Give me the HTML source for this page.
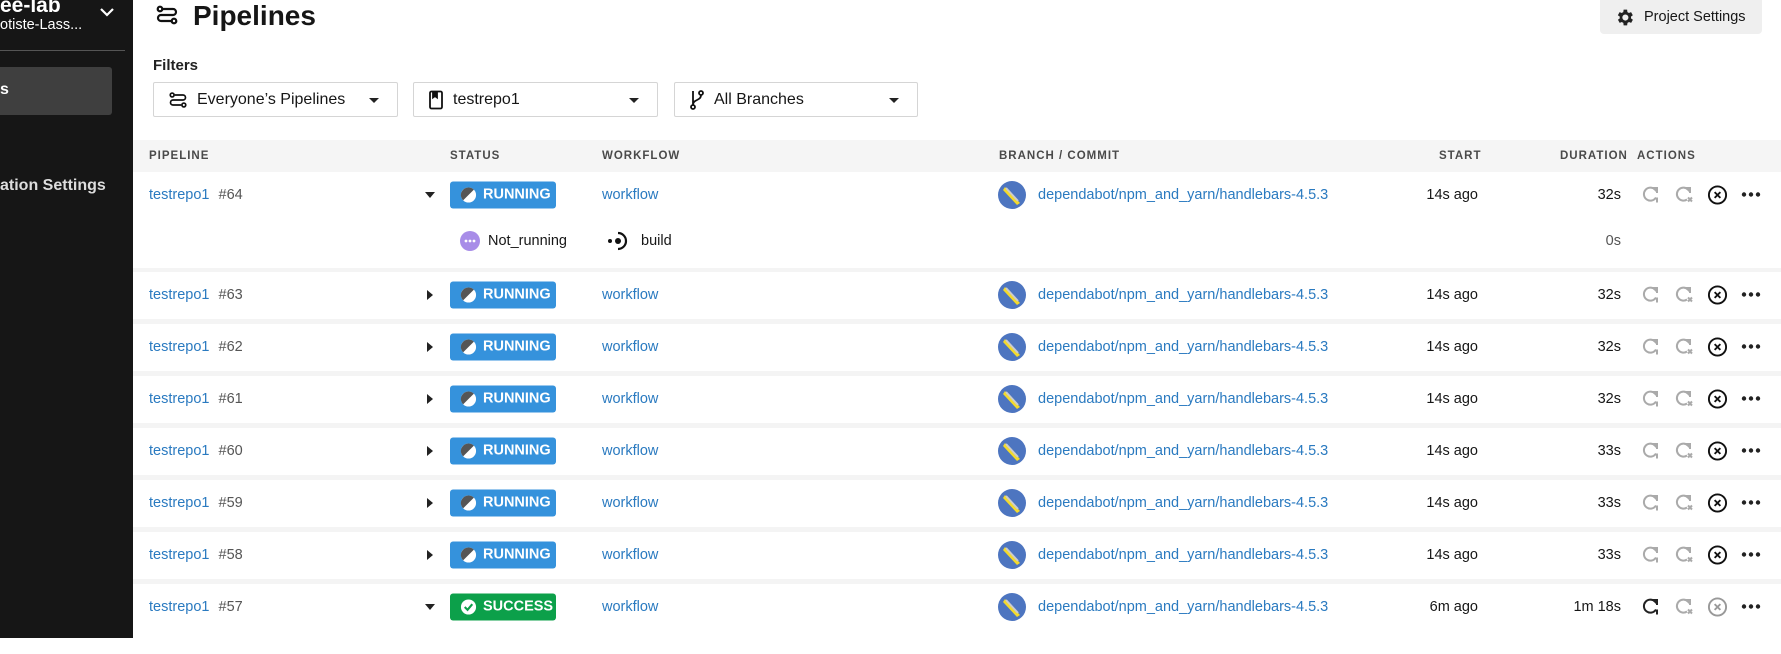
<!DOCTYPE html>
<html><head><meta charset="utf-8"><style>
*{margin:0;padding:0;box-sizing:border-box}
body{width:1781px;height:638px;overflow:hidden;background:#fff;font-family:"Liberation Sans",sans-serif;color:#161616;position:relative}
.abs{position:absolute}
.sb{left:0;top:0;width:133px;height:638px;background:#161616;color:#fff}
.hdr{left:133px;top:140px;width:1648px;height:32px;background:#f5f5f5}
.hdr span{position:absolute;top:10px;font-size:11.5px;font-weight:bold;letter-spacing:1px;color:#4a4a4a}
.gap{left:133px;top:172px;width:1648px;height:466px;background:#f4f4f4}
.row{position:absolute;left:133px;width:1648px;background:#fff;height:47px;font-size:14.5px}
.lnk{color:#2a7ac0}
.gr{color:#555}
.badge{left:317px;width:106px;height:27px;border-radius:3px;color:#fff;font-weight:bold;font-size:14.5px;display:flex;align-items:center;padding-left:10px;gap:6px}
.run{background:#3592dc}.suc{background:#0ca04a}
.dd{top:82px;height:35px;border:1px solid #d5d5d5;border-radius:2px;font-size:16px;display:flex;align-items:center;padding-left:14px;gap:9px}
.dd .car{position:absolute;right:18px;top:15px;width:0;height:0;border-left:5px solid transparent;border-right:5px solid transparent;border-top:5px solid #222}
</style></head><body>
<div class="abs sb">
 <div class="abs" style="left:0;top:-6px;font-size:21px;font-weight:bold">ee-lab</div>
 <div class="abs" style="left:0;top:17px;font-size:14.5px">otiste-Lass...</div>
 <svg class="abs" style="left:99px;top:5px" width="16" height="14" viewBox="0 0 16 14"><path d="M2 4l6 6 6-6" stroke="#fff" stroke-width="2.2" fill="none"/></svg>
 <div class="abs" style="left:0;top:50px;width:125px;height:1px;background:#555"></div>
 <div class="abs" style="left:0;top:67px;width:112px;height:48px;background:#3f3f3f;border-radius:0 3px 3px 0"></div>
 <div class="abs" style="left:0;top:81px;font-size:16px;font-weight:bold">s</div>
 <div class="abs" style="left:0;top:177px;font-size:16px;font-weight:bold;color:#ddd">ation Settings</div>
</div>
<svg class="abs" style="left:155px;top:3px" width="24" height="24" viewBox="0 0 24 24" fill="none" stroke="#111" stroke-width="2.2"><circle cx="5" cy="6" r="2.3"/><circle cx="19" cy="18" r="2.3"/><path d="M8 6h10a3 3 0 0 1 0 6H6a3 3 0 0 0 0 6h10"/></svg>
<div class="abs" style="left:193px;top:0px;font-size:28px;font-weight:bold">Pipelines</div>
<div class="abs" style="left:1600px;top:0;width:162px;height:34px;background:#efefef;border-radius:0 0 4px 4px;font-size:14.5px;display:flex;align-items:center;padding-left:14px;gap:9px">
<svg width="21" height="21" viewBox="0 0 24 24"><path fill="#222" d="M19.4 13a7.5 7.5 0 0 0 0-2l2.1-1.6-2-3.5-2.5 1a7 7 0 0 0-1.7-1L15 3h-4l-.4 2.9a7 7 0 0 0-1.7 1l-2.5-1-2 3.5L6.6 11a7.5 7.5 0 0 0 0 2l-2.1 1.6 2 3.5 2.5-1a7 7 0 0 0 1.7 1L11 21h4l.4-2.9a7 7 0 0 0 1.7-1l2.5 1 2-3.5zM13 15.5a3.5 3.5 0 1 1 0-7 3.5 3.5 0 0 1 0 7z"/></svg>Project Settings</div>
<div class="abs" style="left:153px;top:57px;font-size:15px;font-weight:bold;color:#222">Filters</div>
<div class="abs dd" style="left:153px;width:245px"><svg width="20" height="20" viewBox="0 0 24 24" fill="none" stroke="#111" stroke-width="2"><circle cx="5" cy="6" r="2.3"/><circle cx="19" cy="18" r="2.3"/><path d="M8 6h10a3 3 0 0 1 0 6H6a3 3 0 0 0 0 6h10"/></svg>Everyone’s Pipelines<i class="car"></i></div>
<div class="abs dd" style="left:413px;width:245px"><svg width="16" height="20" viewBox="0 0 16 20" fill="none" stroke="#111" stroke-width="1.8"><rect x="2" y="1.5" width="12" height="17" rx="1.5"/><path d="M5 1.5v6l2-1.5 2 1.5v-6" fill="#111"/></svg>testrepo1<i class="car"></i></div>
<div class="abs dd" style="left:674px;width:244px"><svg width="16" height="22" viewBox="0 0 16 22" fill="none" stroke="#111" stroke-width="1.8"><circle cx="4" cy="18" r="2"/><circle cx="12" cy="4" r="2"/><path d="M4 2v14M12 6c0 6-8 4-8 10"/></svg>All Branches<i class="car"></i></div>
<div class="abs hdr"><span style="left:16px">PIPELINE</span><span style="left:317px">STATUS</span><span style="left:469px">WORKFLOW</span><span style="left:866px">BRANCH / COMMIT</span><span style="left:1306px">START</span><span style="left:1427px">DURATION</span><span style="left:1504px">ACTIONS</span></div>
<div class="abs gap"></div>
<div id="rows"></div>
<script>
var R=[[64,'32s','r','d'],[63,'32s','r','r'],[62,'32s','r','r'],[61,'32s','r','r'],[60,'33s','r','r'],[59,'33s','r','r'],[58,'33s','r','r'],[57,'1m 18s','s','d']];
var h='';
var C='position:absolute;top:50%;transform:translateY(-50%);';
var runIco='<svg width="17" height="17" viewBox="0 0 18 18"><circle cx="9" cy="9" r="8" fill="#fff"/><path d="M9 1a8 8 0 0 0-5.7 13.7L14.7 3.3A8 8 0 0 0 9 1z" fill="#555"/></svg>';
var sucIco='<svg width="17" height="17" viewBox="0 0 18 18"><circle cx="9" cy="9" r="8" fill="#fff"/><path d="M5 9l3 3 5-6" stroke="#0ca04a" stroke-width="2.2" fill="none"/></svg>';
var av='<svg width="28" height="28" viewBox="0 0 28 28"><circle cx="14" cy="14" r="14" fill="#4d75c0"/><path d="M7 6l15 16-3 2L5 9z" fill="#f3da2c"/><path d="M8 7l12 13" stroke="#ccc" stroke-width="2"/></svg>';
function acts(ok){var c1=ok?'#222':'#aaa',c3=ok?'#999':'#111';
return '<div style="'+C+'left:1508px;display:flex;gap:13px;align-items:center">'+
'<svg width="20" height="20" viewBox="0 0 20 20" fill="none" stroke="'+c1+'" stroke-width="2"><path d="M14 5a6.5 6.5 0 1 0 1 8"/><path d="M11 3.5h5v5" fill="'+c1+'"/><path d="M16 13v5"/></svg>'+
'<svg width="20" height="20" viewBox="0 0 20 20" fill="none" stroke="#aaa" stroke-width="2"><path d="M14 5a6.5 6.5 0 1 0-1 10"/><path d="M11 3.5h5v5" fill="#aaa"/><path d="M14 13l4 4M18 13l-4 4"/></svg>'+
'<svg width="21" height="21" viewBox="0 0 22 22" fill="none" stroke="'+c3+'" stroke-width="2"><circle cx="11" cy="11" r="9"/><path d="M8 8l6 6M14 8l-6 6"/></svg>'+
'<svg width="20" height="6" viewBox="0 0 20 6"><circle cx="3" cy="3" r="2.2" fill="#222"/><circle cx="10" cy="3" r="2.2" fill="#222"/><circle cx="17" cy="3" r="2.2" fill="#222"/></svg></div>';}
R.forEach(function(r,i){var top=i==0?172:272+52*(i-1);var hh=i==0?96:(i==7?70:47);
var car=r[3]=='d'?'<svg width="10" height="6"><path d="M0 0h10L5 6z" fill="#222"/></svg>':'<svg width="6" height="10"><path d="M0 0v10l6-5z" fill="#222"/></svg>';
var b=r[2]=='r'?'<div class="badge run" style="'+C+'">'+runIco+'RUNNING</div>':'<div class="badge suc" style="'+C+'">'+sucIco+'SUCCESS</div>';
h+='<div class="row" style="top:'+top+'px;height:'+hh+'px"><div style="position:absolute;left:0;top:-1px;width:100%;height:47px">'+
'<span class="lnk" style="'+C+'left:16px">testrepo1 <span class="gr" style="margin-left:5px">#'+r[0]+'</span></span>'+
'<div style="'+C+'left:'+(r[3]=='d'?292:294)+'px;line-height:0">'+car+'</div>'+b+
'<span class="lnk" style="'+C+'left:469px">workflow</span>'+
'<div style="'+C+'left:865px;line-height:0">'+av+'</div>'+
'<span class="lnk" style="'+C+'left:905px">dependabot/npm_and_yarn/handlebars-4.5.3</span>'+
'<span style="'+C+'right:303px">'+(r[2]=='s'?'6m ago':'14s ago')+'</span>'+
'<span style="'+C+'right:160px">'+r[1]+'</span>'+acts(r[2]=='s')+'</div>';
if(i==0){h+='<div style="position:absolute;left:0;top:49px;width:100%;height:40px">'+
'<div style="position:absolute;left:327px;top:10px;display:flex;align-items:center;gap:8px"><svg width="20" height="20"><circle cx="10" cy="10" r="10" fill="#a88de8"/><circle cx="6" cy="10" r="1.4" fill="#fff"/><circle cx="10" cy="10" r="1.4" fill="#fff"/><circle cx="14" cy="10" r="1.4" fill="#fff"/></svg>Not_running</div>'+
'<div style="position:absolute;left:474px;top:10px;display:flex;align-items:center;gap:12px"><svg width="22" height="20" viewBox="0 0 22 20"><circle cx="3" cy="10" r="2" fill="#111"/><circle cx="11" cy="10" r="3" fill="#111"/><path d="M11 2a8 8 0 1 1 0 16" stroke="#111" stroke-width="2.2" fill="none"/></svg>build</div>'+
'<span class="gr" style="position:absolute;right:160px;top:12px">0s</span></div>';}
h+='</div>';});
document.getElementById('rows').innerHTML=h;
</script>
</body></html>
